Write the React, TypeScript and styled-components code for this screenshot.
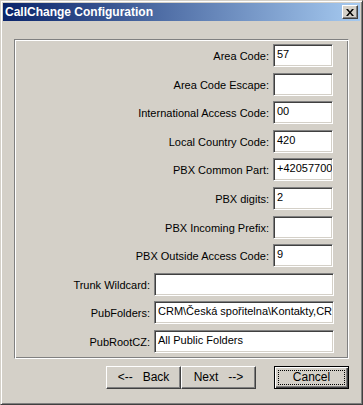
import React from 'react';
import styled, { createGlobalStyle } from 'styled-components';

const GlobalStyle = createGlobalStyle`
  html, body {
    margin: 0;
    padding: 0;
    background: #d4d0c8;
  }
  * {
    box-sizing: border-box;
  }
`;

const Window = styled.div`
  width: 363px;
  height: 405px;
  background: #d4d0c8;
  border: 1px solid;
  border-color: #d4d0c8 #404040 #404040 #d4d0c8;
  box-shadow: inset 1px 1px #ffffff, inset -1px -1px #808080;
  padding: 2px;
  display: flex;
  flex-direction: column;
  font-family: 'Liberation Sans', Arial, sans-serif;
  font-size: 11px;
  color: #000;
`;

const TitleBar = styled.div`
  height: 18px;
  display: flex;
  align-items: center;
  justify-content: space-between;
  padding: 0 2px 0 2px;
  background: linear-gradient(to right, #0a246a, #a6caf0);
`;

const TitleText = styled.span`
  color: #fff;
  font-weight: bold;
  font-size: 12px;
`;

const CloseButton = styled.div`
  width: 16px;
  height: 14px;
  background: #d4d0c8;
  border: 1px solid;
  border-color: #ffffff #404040 #404040 #ffffff;
  box-shadow: inset -1px -1px #808080;
  display: flex;
  align-items: center;
  justify-content: center;
`;

const Body = styled.div`
  flex: 1;
  display: flex;
  flex-direction: column;
  padding: 18px 11px 10px 11px;
`;

const GroupBox = styled.div`
  border: 1px solid;
  border-color: #808080 #ffffff #ffffff #808080;
  box-shadow: inset 1px 1px #ffffff, inset -1px -1px #808080;
  padding: 4px 14px 5px 4px;
  display: flex;
  flex-direction: column;
  gap: 5.6px;
`;

const Row = styled.div`
  height: 23px;
  display: flex;
  align-items: center;
  justify-content: flex-end;
  gap: 4px;
`;

const Label = styled.span`
  white-space: nowrap;
  padding-top: 1px;
`;

const TextBox = styled.div<{ $wide?: boolean }>`
  width: ${(p) => (p.$wide ? '180px' : '60px')};
  margin-right: ${(p) => (p.$wide ? '0' : '1px')};
  height: 23px;
  background: #ffffff;
  border: 1px solid;
  border-color: #808080 #ffffff #ffffff #808080;
  box-shadow: inset 1px 1px #404040, inset -1px -1px #d4d0c8;
  padding: 1px 2px 0 3px;
  white-space: nowrap;
  overflow: hidden;
  line-height: 16px;
`;

const ButtonRow = styled.div`
  display: flex;
  justify-content: flex-end;
  margin-top: 7px;
`;

const Button = styled.div<{ $default?: boolean }>`
  width: 75px;
  height: 23px;
  display: flex;
  align-items: center;
  justify-content: center;
  background: #d4d0c8;
  border: 1px solid;
  border-color: ${(p) => (p.$default ? '#000' : '#ffffff #404040 #404040 #ffffff')};
  box-shadow: ${(p) =>
    p.$default
      ? 'inset 1px 1px #ffffff, inset -1px -1px #404040, inset -2px -2px #808080'
      : 'inset -1px -1px #808080'};
  margin-left: ${(p) => (p.$default ? '18px' : '0')};
  position: relative;
  font-size: 12px;
  white-space: pre;
`;

const FocusRing = styled.span`
  position: absolute;
  inset: 3px;
  border: 1px dotted #000;
`;

const fields: { label: string; value: string; wide?: boolean }[] = [
  { label: 'Area Code:', value: '57' },
  { label: 'Area Code Escape:', value: '' },
  { label: 'International Access Code:', value: '00' },
  { label: 'Local Country Code:', value: '420' },
  { label: 'PBX Common Part:', value: '+42057700' },
  { label: 'PBX digits:', value: '2' },
  { label: 'PBX Incoming Prefix:', value: '' },
  { label: 'PBX Outside Access Code:', value: '9' },
  { label: 'Trunk Wildcard:', value: '', wide: true },
  { label: 'PubFolders:', value: 'CRM\\Česká spořitelna\\Kontakty,CR', wide: true },
  { label: 'PubRootCZ:', value: 'All Public Folders', wide: true },
];

const App = () => {
  return (
    <>
      <GlobalStyle />
      <Window>
        <TitleBar>
          <TitleText>CallChange Configuration</TitleText>
          <CloseButton>
            <svg width="8" height="7" viewBox="0 0 8 7">
              <path d="M0 0h2l2 2.5L6 0h2L5 3.5 8 7H6L4 4.5 2 7H0l3-3.5z" fill="#000" />
            </svg>
          </CloseButton>
        </TitleBar>
        <Body>
          <GroupBox>
            {fields.map((f) => (
              <Row key={f.label}>
                <Label>{f.label}</Label>
                <TextBox $wide={f.wide}>{f.value}</TextBox>
              </Row>
            ))}
          </GroupBox>
          <ButtonRow>
            <Button>{'<--   Back'}</Button>
            <Button>{'Next   -->'}</Button>
            <Button $default>
              <FocusRing />
              Cancel
            </Button>
          </ButtonRow>
        </Body>
      </Window>
    </>
  );
};

export default App;
